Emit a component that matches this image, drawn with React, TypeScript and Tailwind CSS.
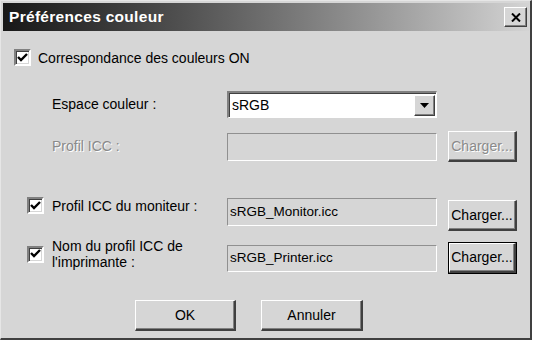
import React from "react"

const font = { fontFamily: '"Liberation Sans", Arial, sans-serif' }

function Check() {
  return (
    <div className="w-[17px] h-[17px] bg-white border-t-2 border-l-2 border-t-[#808080] border-l-[#808080] border-b-2 border-r-2 border-b-white border-r-white shadow-[inset_1px_1px_0_#404040,inset_-1px_-1px_0_#d6d6d6] flex items-center justify-center shrink-0">
      <svg width="11" height="10" viewBox="0 0 11 10">
        <path d="M1 4 L4 7 L10 1" stroke="#000" strokeWidth="2.4" fill="none" />
      </svg>
    </div>
  )
}

function Field({ text, h = "h-[28px]" }: { text?: string; h?: string }) {
  return (
    <div
      className={`w-[210px] ${h} shrink-0 bg-[#d6d6d6] border-t border-l border-t-[#909090] border-l-[#909090] border-b border-r border-b-white border-r-white flex items-center px-[2px] text-[13.5px] text-black`}
    >
      {text}
    </div>
  )
}

function Btn({ label, disabled, def, w = "w-[69px]", h = "h-[31px]" }: { label: string; disabled?: boolean; def?: boolean; w?: string; h?: string }) {
  return (
    <div className={`${w} ${h} flex shrink-0 bg-[#d6d6d6] ` + (def ? "border border-black" : "")}>
      <div
        className={
          "flex-1 flex items-center justify-center border-t border-l border-t-white border-l-white border-b-2 border-r-2 border-b-[#404040] border-r-[#404040] shadow-[inset_-1px_-1px_0_#808080] text-[14px] " +
          (disabled ? "text-[#8a8a8a] [text-shadow:1px_1px_0_#fff]" : "text-black")
        }
      >
        {label}
      </div>
    </div>
  )
}

export default function App() {
  return (
    <div style={font} className="w-[534px] h-[342px] bg-white overflow-hidden">
      <div className="w-[532px] h-[340px] bg-[#d6d6d6] border-t border-l border-t-[#e6e6e6] border-l-[#e6e6e6] border-r-2 border-b-2 border-r-[#404040] border-b-[#404040] flex flex-col pt-[2px] pl-[2px] pr-[1px] text-[14px] text-black">
        {/* title bar */}
        <div className="h-[28px] shrink-0 flex items-center justify-between bg-gradient-to-r from-[#181818] to-[#d4d4d4] pl-[6px] pr-[2px]">
          <span className="text-white font-bold text-[15.5px] tracking-[0.3px]">Préférences couleur</span>
          <div className="w-[23px] h-[20px] bg-[#d6d6d6] border-t border-l border-t-white border-l-white border-b border-r border-b-[#404040] border-r-[#404040] shadow-[inset_-1px_-1px_0_#808080] flex items-center justify-center">
            <svg width="10" height="9" viewBox="0 0 10 9">
              <path d="M1 0.5 L9 8.5 M9 0.5 L1 8.5" stroke="#000" strokeWidth="2" />
            </svg>
          </div>
        </div>

        {/* main check */}
        <div className="flex items-center gap-[7px] pl-[11px] mt-[18px] h-[17px] shrink-0">
          <Check />
          <span className="leading-none">Correspondance des couleurs ON</span>
        </div>

        {/* espace couleur */}
        <div className="flex items-center mt-[25px] h-[27px] shrink-0">
          <span className="w-[224px] pl-[49px] shrink-0">Espace couleur :</span>
          <div className="w-[210px] h-[27px] bg-white border-t-2 border-l-2 border-t-[#808080] border-l-[#808080] border-b border-r border-b-white border-r-white shadow-[inset_1px_1px_0_#404040] flex items-center justify-between pl-[3px] pr-[1px]">
            <span>sRGB</span>
            <div className="w-[21px] h-[21px] bg-[#d6d6d6] border-t border-l border-t-white border-l-white border-b border-r border-b-[#404040] border-r-[#404040] shadow-[inset_-1px_-1px_0_#808080] flex items-center justify-center">
              <svg width="9" height="5" viewBox="0 0 9 5">
                <path d="M0 0 H9 L4.5 5 Z" fill="#000" />
              </svg>
            </div>
          </div>
        </div>

        {/* profil icc disabled */}
        <div className="flex items-center mt-[13px] h-[31px] shrink-0">
          <span className="w-[224px] pl-[49px] shrink-0 text-[#8a8a8a] [text-shadow:1px_1px_0_#fff]">Profil ICC :</span>
          <Field />
          <div className="ml-[11px]">
            <Btn label="Charger..." disabled />
          </div>
        </div>

        {/* moniteur */}
        <div className="flex items-start mt-[35px] h-[34px] shrink-0">
          <div className="w-[224px] shrink-0 flex items-center gap-[8px] pl-[24px] h-[17px]">
            <Check />
            <span className="leading-none">Profil ICC du moniteur :</span>
          </div>
          <div className="mt-[1px]">
            <Field text="sRGB_Monitor.icc" />
          </div>
          <div className="ml-[11px] mt-[3px]">
            <Btn label="Charger..." />
          </div>
        </div>

        {/* imprimante */}
        <div className="flex items-start mt-[11px] h-[33px] shrink-0">
          <div className="w-[224px] shrink-0 flex items-center gap-[8px] pl-[24px] h-[32px] mt-[-4px]">
            <Check />
            <span className="leading-[16px]">
              Nom du profil ICC de
              <br />
              l'imprimante :
            </span>
          </div>
          <div className="mt-[3px]">
            <Field text="sRGB_Printer.icc" h="h-[27px]" />
          </div>
          <div className="ml-[11px]">
            <Btn label="Charger..." def h="h-[32px]" />
          </div>
        </div>

        {/* ok / annuler */}
        <div className="flex items-center gap-[25px] mt-[25px] pl-[132px] shrink-0">
          <Btn label="OK" w="w-[101px]" h="h-[31px]" />
          <Btn label="Annuler" w="w-[102px]" h="h-[31px]" />
        </div>
      </div>
    </div>
  )
}
